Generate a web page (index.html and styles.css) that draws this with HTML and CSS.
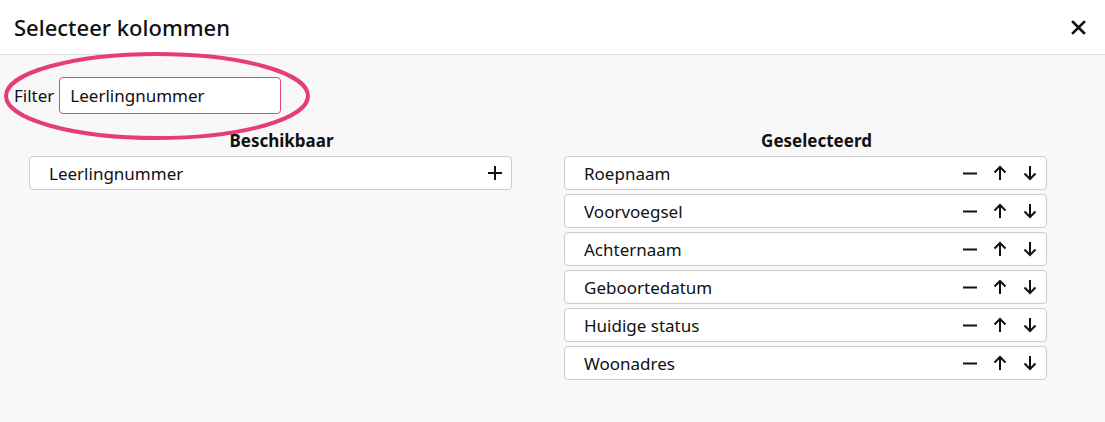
FILE: index.html
```html
<!DOCTYPE html>
<html lang="nl">
<head>
    <meta charset="UTF-8">
    <meta name="viewport" content="width=device-width, initial-scale=1.0">
    <title>Selecteer kolommen</title>
    <link rel="stylesheet" href="styles.css">
</head>
<body>
    <div class="modal">
        <!-- Kop -->
        <div class="modal-header">
            <h2 class="modal-title">Selecteer kolommen</h2>
            <button class="close" aria-label="Sluiten">
                <svg width="15" height="15" viewBox="0 0 15 15"><path d="M2 2L13 13M13 2L2 13" stroke="#111" stroke-width="2.6" stroke-linecap="square"/></svg>
            </button>
        </div>

        <div class="modal-body">
            <!-- Filter -->
            <div class="filter">
                <label for="filter">Filter</label>
                <input id="filter" type="text" value="Leerlingnummer">
                <svg class="highlight" width="312" height="92" viewBox="0 0 312 92"><ellipse cx="155" cy="46" rx="151" ry="42" fill="none" stroke="#e43d78" stroke-width="4"/></svg>
            </div>

            <div class="columns">
                <!-- Beschikbaar -->
                <div class="column">
                    <h3>Beschikbaar</h3>
                    <ul class="list">
                        <li class="item">
                            <span>Leerlingnummer</span>
                            <span class="actions">
                                <svg width="16" height="16" viewBox="0 0 16 16"><path d="M8 1V15M1 8H15" stroke="#111" stroke-width="2"/></svg>
                            </span>
                        </li>
                    </ul>
                </div>

                <!-- Geselecteerd -->
                <div class="column">
                    <h3>Geselecteerd</h3>
                    <ul class="list" id="selected"></ul>
                </div>
            </div>
        </div>
    </div>

    <script>
        const selected = ['Roepnaam', 'Voorvoegsel', 'Achternaam', 'Geboortedatum', 'Huidige status', 'Woonadres'];
        const icons =
            '<svg width="16" height="16" viewBox="0 0 16 16"><path d="M1 8.5H15" stroke="#111" stroke-width="2"/></svg>' +
            '<svg width="16" height="16" viewBox="0 0 16 16"><path d="M8 15V2M2.5 7.5L8 2L13.5 7.5" fill="none" stroke="#111" stroke-width="2"/></svg>' +
            '<svg width="16" height="16" viewBox="0 0 16 16"><path d="M8 1V14M2.5 8.5L8 14L13.5 8.5" fill="none" stroke="#111" stroke-width="2"/></svg>';
        const list = document.getElementById('selected');
        selected.forEach(name => {
            const li = document.createElement('li');
            li.className = 'item';
            li.innerHTML = '<span>' + name + '</span><span class="actions">' + icons + '</span>';
            list.appendChild(li);
        });
    </script>
</body>
</html>
```

FILE: styles.css
```css
body {
    margin: 0;
    font-family: "Noto Sans", sans-serif;
    color: #111;
    background: #f8f8f8;
    height: 422px;
    overflow: hidden;
}
.modal-header {
    display: flex;
    justify-content: space-between;
    align-items: center;
    height: 55px;
    padding: 0 19px 0 14px;
    background: #fff;
    border-bottom: 1px solid #ddd;
    box-sizing: border-box;
}
.modal-title {
    margin: 0;
    font-size: 22px;
    font-weight: 500;
}
.close {
    border: none;
    background: none;
    padding: 0;
    display: flex;
    cursor: pointer;
}
.modal-body {
    padding: 22px 21px 0 14px;
}
.filter {
    position: relative;
    display: flex;
    align-items: center;
    gap: 5px;
    font-size: 17px;
}
.filter input {
    width: 222px;
    height: 37px;
    box-sizing: border-box;
    border: 1px solid #e2457d;
    border-radius: 4px;
    padding: 0 10px;
    font-family: inherit;
    font-size: 17px;
    color: #111;
}
.highlight {
    position: absolute;
    left: -12px;
    top: -27px;
    pointer-events: none;
}
.columns {
    display: grid;
    grid-template-columns: 1fr 1fr;
    margin-top: 16px;
}
.column h3 {
    margin: 0 0 4px;
    font-size: 17px;
    font-weight: bold;
    text-align: center;
    line-height: 22px;
}
.list {
    list-style: none;
    margin: 0;
    padding: 0 37px 0 15px;
}
.item {
    display: flex;
    justify-content: space-between;
    align-items: center;
    height: 34px;
    box-sizing: border-box;
    margin-bottom: 4px;
    padding: 0 8px 0 19px;
    background: #fff;
    border: 1px solid #ccc;
    border-radius: 4px;
    font-size: 17px;
}
.actions {
    display: flex;
    gap: 14px;
}
.actions svg {
    display: block;
}
```
